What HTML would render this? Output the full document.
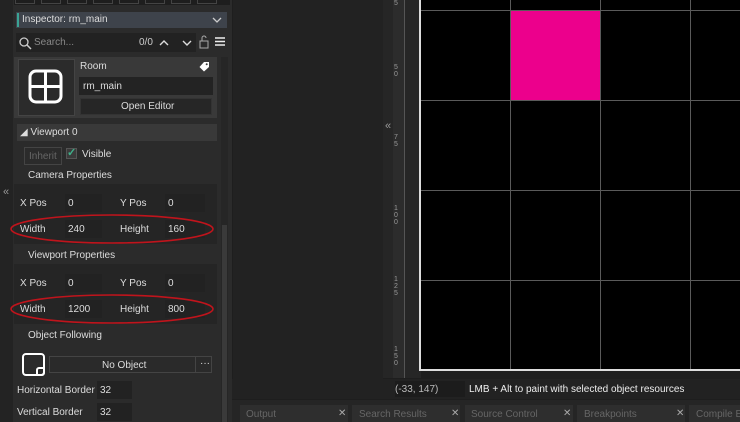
<!DOCTYPE html>
<html><head><style>
*{margin:0;padding:0;box-sizing:border-box}
body{width:740px;height:422px;overflow:hidden;background:#1e1e1e;font-family:"Liberation Sans",sans-serif;font-size:10px;color:#ddd;position:relative}
.a{position:absolute}
.f{position:absolute;background:#222;height:18px}
.t{position:absolute;white-space:nowrap}
</style></head><body>
<!-- left panel -->
<div class="a" style="left:0;top:0;width:13px;height:422px;background:#232323"></div>
<div class="t" style="left:3px;top:186px;color:#999;font-size:11px">«</div>
<div class="a" style="left:13px;top:0;width:219px;height:422px;background:#2b2b2b"></div>
<div class="a" style="left:14px;top:0;width:216px;height:5px;background:#1e1e1e"></div>
<div class="a" style="left:15px;top:0;width:20px;height:4px;border:1px solid #444;border-top:none"></div>
<div class="a" style="left:41px;top:0;width:20px;height:4px;border:1px solid #444;border-top:none"></div>
<div class="a" style="left:67px;top:0;width:20px;height:4px;border:1px solid #444;border-top:none"></div>
<div class="a" style="left:93px;top:0;width:20px;height:4px;border:1px solid #444;border-top:none"></div>
<div class="a" style="left:119px;top:0;width:20px;height:4px;border:1px solid #444;border-top:none"></div>
<div class="a" style="left:145px;top:0;width:20px;height:4px;border:1px solid #444;border-top:none"></div>
<div class="a" style="left:171px;top:0;width:20px;height:4px;border:1px solid #444;border-top:none"></div>
<div class="a" style="left:197px;top:0;width:20px;height:4px;border:1px solid #444;border-top:none"></div>
<div class="a" style="left:16px;top:12px;width:211px;height:16px;background:#3e434b"></div>
<div class="a" style="left:17px;top:13px;width:2px;height:14px;background:#3aa394"></div>
<div class="t" style="left:22px;top:14px;color:#ddd">Inspector: rm_main</div>
<svg class="a" style="left:212px;top:16px" width="10" height="8"><path d="M1 2L5 6L9 2" stroke="#ccc" stroke-width="1.3" fill="none"/></svg>
<div class="a" style="left:16px;top:33px;width:180px;height:19px;background:#222"></div>
<svg class="a" style="left:18px;top:36px" width="14" height="14"><circle cx="6" cy="6" r="4" stroke="#ccc" stroke-width="1.3" fill="none"/><line x1="9" y1="9" x2="13" y2="13" stroke="#ccc" stroke-width="1.5"/></svg>
<div class="t" style="left:34px;top:37px;color:#888">Search...</div>
<div class="t" style="left:139px;top:37px;color:#ccc">0/0</div>
<svg class="a" style="left:159px;top:38px" width="34" height="10"><path d="M1 7 L5 3 L9 7 M24 3 L28 7 L32 3" stroke="#ddd" stroke-width="1.4" fill="none"/></svg>
<svg class="a" style="left:199px;top:34px" width="28" height="16"><rect x="1" y="7" width="8" height="7" stroke="#aaa" fill="none"/><path d="M3 7V4a2 2 0 0 1 4 0" stroke="#aaa" fill="none"/><path d="M16 4h10M16 7.5h10M16 11h10" stroke="#eee" stroke-width="1.6"/></svg>
<div class="a" style="left:14px;top:57px;width:203px;height:61px;background:#393939"></div>
<div class="a" style="left:18px;top:59px;width:57px;height:57px;background:#2b2b2b;border:1px solid #444"></div>
<svg class="a" style="left:28px;top:69px" width="36" height="36"><rect x="2" y="2" width="31" height="31" rx="6" stroke="#fff" stroke-width="3" fill="none"/><path d="M17.5 2v31M2 17.5h31" stroke="#fff" stroke-width="3"/></svg>
<div class="t" style="left:80px;top:61px">Room</div>
<svg class="a" style="left:199px;top:61px" width="11" height="11"><path d="M5 1H10V6L5 10.5L0.5 6Z" fill="#fff"/><circle cx="7.7" cy="3.3" r="1" fill="#393939"/></svg>
<div class="a" style="left:79px;top:77px;width:134px;height:18px;background:#232323"></div>
<div class="t" style="left:83px;top:81px">rm_main</div>
<div class="a" style="left:80px;top:98px;width:132px;height:17px;background:#262626;border:1px solid #333"></div>
<div class="t" style="left:121px;top:101px">Open Editor</div>
<div class="a" style="left:17px;top:124px;width:200px;height:17px;background:#393939"></div>
<div class="t" style="left:20px;top:127px">◢ Viewport 0</div>
<div class="a" style="left:24px;top:147px;width:38px;height:18px;border:1px solid #444"></div>
<div class="t" style="left:29px;top:151px;color:#666">Inherit</div>
<div class="a" style="left:66px;top:148px;width:11px;height:11px;background:#3a3a3a;border:1px solid #555"></div>
<div class="t" style="left:67px;top:146px;color:#3fb08a;font-size:11px;font-weight:bold">✓</div>
<div class="t" style="left:82px;top:149px">Visible</div>
<div class="t" style="left:28px;top:170px">Camera Properties</div>
<div class="a" style="left:14px;top:184px;width:203px;height:60px;background:#252525"></div>
<div class="a" style="left:14px;top:264px;width:203px;height:60px;background:#252525"></div>
<div class="f" style="left:65px;top:194px;width:37px"></div><div class="f" style="left:165px;top:194px;width:40px"></div>
<div class="f" style="left:65px;top:220px;width:37px"></div><div class="f" style="left:165px;top:220px;width:40px"></div>
<div class="f" style="left:65px;top:274px;width:37px"></div><div class="f" style="left:165px;top:274px;width:40px"></div>
<div class="f" style="left:65px;top:300px;width:37px"></div><div class="f" style="left:165px;top:300px;width:40px"></div>
<div class="t" style="left:20px;top:198px">X Pos</div><div class="t" style="left:68px;top:198px">0</div>
<div class="t" style="left:120px;top:198px">Y Pos</div><div class="t" style="left:168px;top:198px">0</div>
<div class="t" style="left:20px;top:224px">Width</div><div class="t" style="left:68px;top:224px">240</div>
<div class="t" style="left:120px;top:224px">Height</div><div class="t" style="left:168px;top:224px">160</div>
<div class="t" style="left:28px;top:250px">Viewport Properties</div>
<div class="t" style="left:20px;top:278px">X Pos</div><div class="t" style="left:68px;top:278px">0</div>
<div class="t" style="left:120px;top:278px">Y Pos</div><div class="t" style="left:168px;top:278px">0</div>
<div class="t" style="left:20px;top:304px">Width</div><div class="t" style="left:68px;top:304px">1200</div>
<div class="t" style="left:120px;top:304px">Height</div><div class="t" style="left:168px;top:304px">800</div>
<div class="t" style="left:28px;top:330px">Object Following</div>
<div class="a" style="left:22px;top:353px;width:23px;height:23px;border:2px solid #fff;border-radius:4px"></div>
<div class="a" style="left:36px;top:367px;width:9px;height:9px;border:2px solid #fff;border-radius:3px 0 3px 0"></div>
<div class="a" style="left:49px;top:356px;width:163px;height:17px;border:1px solid #444;background:#2a2a2a"></div>
<div class="a" style="left:195px;top:356px;width:1px;height:17px;background:#444"></div>
<div class="t" style="left:102px;top:360px">No Object</div>
<div class="t" style="left:200px;top:358px">···</div>
<div class="f" style="left:97px;top:381px;width:35px"></div>
<div class="f" style="left:97px;top:403px;width:35px"></div>
<div class="t" style="left:17px;top:385px">Horizontal Border</div><div class="t" style="left:100px;top:385px">32</div>
<div class="t" style="left:17px;top:407px">Vertical Border</div><div class="t" style="left:100px;top:407px">32</div>
<div class="a" style="left:221px;top:57px;width:7px;height:365px;background:#262626"></div>
<div class="a" style="left:222px;top:225px;width:5px;height:197px;background:#3a3a3a"></div>
<svg class="a" style="left:0;top:0" width="232" height="422"><ellipse cx="112" cy="229" rx="101" ry="14" stroke="#c0141c" stroke-width="1.6" fill="none"/><ellipse cx="112" cy="309" rx="101" ry="14" stroke="#c0141c" stroke-width="1.6" fill="none"/></svg>
<!-- middle panel -->
<div class="a" style="left:233px;top:0;width:150px;height:398px;background:#222"></div>
<div class="a" style="left:233px;top:380px;width:150px;height:1px;background:#333"></div>
<div class="t" style="left:236px;top:382px;color:#777">1 item</div>
<!-- ruler -->
<div class="a" style="left:383px;top:0;width:38px;height:378px;background:#262626"></div>
<div class="a" style="left:393px;top:0;width:12px;height:378px;background:#2c2c2c"></div>
<div class="a" style="left:404px;top:0;width:1px;height:378px;background:#555"></div>
<div class="t" style="left:385px;top:120px;color:#999;font-size:11px">«</div>
<div class="t" style="left:394px;top:0;color:#999;font-size:7px;line-height:7px">5</div>
<div class="t" style="left:394px;top:64px;color:#999;font-size:7px;line-height:7px">5<br>0</div>
<div class="t" style="left:394px;top:134px;color:#999;font-size:7px;line-height:7px">7<br>5</div>
<div class="t" style="left:394px;top:205px;color:#999;font-size:7px;line-height:7px">1<br>0<br>0</div>
<div class="t" style="left:394px;top:276px;color:#999;font-size:7px;line-height:7px">1<br>2<br>5</div>
<div class="t" style="left:394px;top:346px;color:#999;font-size:7px;line-height:7px">1<br>5<br>0</div>
<!-- canvas -->
<div class="a" style="left:419px;top:0;width:321px;height:371px;background:#000;border-left:2px solid #ddd;border-bottom:2px solid #ddd"></div>
<div class="a" style="left:511px;top:11px;width:89px;height:89px;background:#ec008c"></div>
<svg class="a" style="left:421px;top:0" width="319" height="369"><g stroke="#5a5a5a" stroke-width="1"><path d="M89.5 0V369M179.5 0V369M269.5 0V369M0 10.5H319M0 100.5H319M0 190.5H319M0 280.5H319"/></g></svg>
<!-- status -->
<div class="a" style="left:232px;top:379px;width:508px;height:20px;background:#222"></div>
<div class="a" style="left:395px;top:381px;width:70px;height:16px;background:#1c1c1c"></div>
<div class="t" style="left:395px;top:384px;color:#bbb">(-33, 147)</div>
<div class="t" style="left:469px;top:384px;color:#eee">LMB + Alt to paint with selected object resources</div>
<!-- bottom tabs -->
<div class="a" style="left:232px;top:400px;width:508px;height:22px;background:#252525"></div>
<div class="a" style="left:240px;top:405px;width:108px;height:17px;background:#2e2e2e"></div>
<div class="a" style="left:352px;top:405px;width:108px;height:17px;background:#2e2e2e"></div>
<div class="a" style="left:465px;top:405px;width:108px;height:17px;background:#2e2e2e"></div>
<div class="a" style="left:577px;top:405px;width:108px;height:17px;background:#2e2e2e"></div>
<div class="a" style="left:689px;top:405px;width:60px;height:17px;background:#2e2e2e"></div>
<div class="t" style="left:246px;top:409px;color:#666">Output</div><div class="t" style="left:338px;top:408px;color:#aaa">✕</div>
<div class="t" style="left:359px;top:409px;color:#666">Search Results</div><div class="t" style="left:451px;top:408px;color:#aaa">✕</div>
<div class="t" style="left:471px;top:409px;color:#666">Source Control</div><div class="t" style="left:563px;top:408px;color:#aaa">✕</div>
<div class="t" style="left:584px;top:409px;color:#666">Breakpoints</div><div class="t" style="left:676px;top:408px;color:#aaa">✕</div>
<div class="t" style="left:696px;top:409px;color:#666">Compile Er</div>
</body></html>
